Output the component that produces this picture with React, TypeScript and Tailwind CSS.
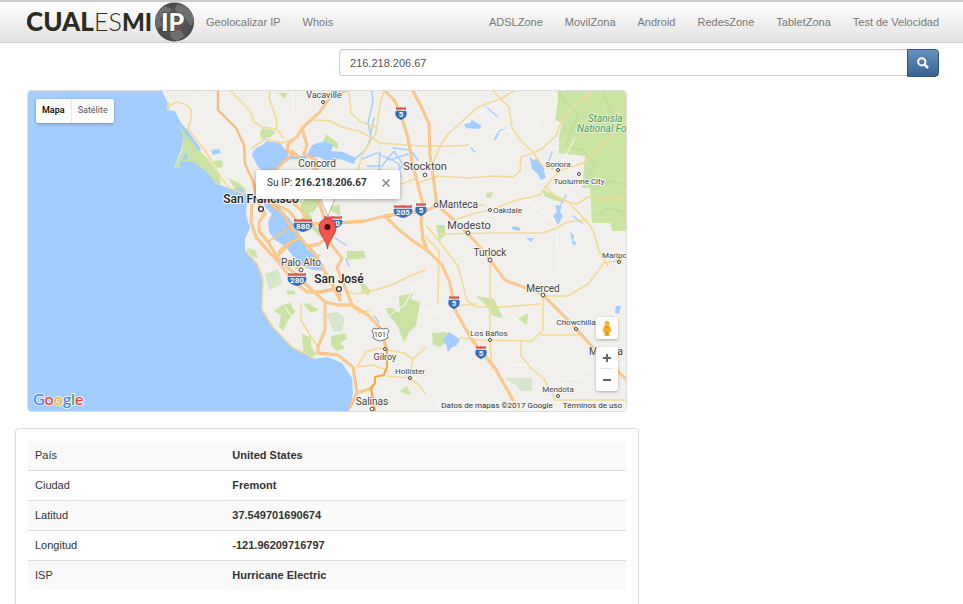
import { FormEvent, useState } from "react";

const leftLinks = ["Geolocalizar IP", "Whois"];
const rightLinks = ["ADSLZone", "MovilZona", "Android", "RedesZone", "TabletZona", "Test de Velocidad"];

const details = [
  ["País", "United States"],
  ["Ciudad", "Fremont"],
  ["Latitud", "37.549701690674"],
  ["Longitud", "-121.96209716797"],
  ["ISP", "Hurricane Electric"],
];

type Town = { name: string; x: number; y: number; size: number; dot?: [number, number]; start?: boolean; strong?: boolean };

const towns: Town[] = [
  { name: "Vacaville", x: 324, y: 98, size: 9, dot: [323, 102] },
  { name: "Concord", x: 317, y: 167, size: 10 },
  { name: "Stockton", x: 425, y: 170, size: 11, dot: [425, 175] },
  { name: "San Francisco", x: 261, y: 203, size: 12, dot: [261, 209], strong: true },
  { name: "Manteca", x: 439, y: 208, size: 10, dot: [436, 205], start: true },
  { name: "Oakdale", x: 493, y: 213, size: 8, dot: [490, 210], start: true },
  { name: "Modesto", x: 469, y: 229, size: 11, dot: [468, 233] },
  { name: "Turlock", x: 490, y: 256, size: 10, dot: [490, 260] },
  { name: "Sonora", x: 558, y: 167, size: 8, dot: [558, 170] },
  { name: "Tuolumne City", x: 579, y: 184, size: 8, dot: [579, 174] },
  { name: "Palo Alto", x: 301, y: 266, size: 10, dot: [301, 270] },
  { name: "San José", x: 339, y: 283, size: 12, dot: [339, 289], strong: true },
  { name: "Merced", x: 543, y: 292, size: 10, dot: [543, 295] },
  { name: "Maripo", x: 602, y: 258, size: 8, dot: [619, 262], start: true },
  { name: "Chowchilla", x: 576, y: 325, size: 8, dot: [576, 329] },
  { name: "Los Baños", x: 489, y: 336, size: 8, dot: [490, 340] },
  { name: "Gilroy", x: 385, y: 360, size: 9, dot: [385, 349] },
  { name: "Hollister", x: 410, y: 374, size: 8, dot: [410, 378] },
  { name: "Madera", x: 606, y: 355, size: 10 },
  { name: "Mendota", x: 558, y: 392, size: 8, dot: [558, 396] },
  { name: "Salinas", x: 372, y: 405, size: 10, dot: [372, 409] },
];

const freeways = [
  "M346 91C335 92 331 97 328 100L320 112L302 128L297 137L288 144L287 150L292 155L278 167L266 188L272 205L284 215L290 226L302 240L315 254L324 270L333 286L340 300",
  "M302 128L307 145L304 154L316 160L318 175L318 200L324 217L334 231L330 243L342 258L337 268L345 287L352 305",
  "M292 151L302 160L315 169M272 203L289 211L297 221L310 224L338 223L365 221L385 216L405 213L425 211L437 206",
  "M253 181L255 190L259 204L265 214L259 222L259 231L268 242L278 258L295 274L312 290L325 302L338 305L352 305L368 315L380 328L387 350",
  "M252 205L251 222L256 237L270 253L279 263L292 280L307 292L319 292L335 289L340 295",
  "M385 91L395 101L402 118L408 138L412 161L418 185L423 204L421 222L423 239L427 250L442 265L450 283L455 310L472 340L495 368L513 400L518 411",
  "M413 91L422 108L429 124L430 155L433 175L437 205L455 221L475 241L490 260L505 280L542 294L568 320L598 353L627 380",
  "M385 216L398 229L413 241L427 250M325 302L325 330L318 347L318 353L338 355L353 367L357 393L350 407M357 393L372 388",
  "M267 178L279 190L290 200L302 211L311 224M301 238L288 243L279 252M330 235L319 244L308 246",
];

const roads = [
  "M168 107L176 102L185 104L191 109L191 119L188 129L205 150L220 176L229 188L247 195",
  "M252 148L265 139L283 143L296 137L304 128M231 91L250 111L254 122L262 127L276 129L277 120L269 98L270 91",
  "M277 129L283 138M315 120L330 121L342 127L359 131L370 137L380 143L420 146L456 146L468 145",
  "M384 91L380 105L376 133L362 155L358 170L374 180L402 184L414 179M349 91L351 113L361 122L376 127",
  "M418 183L438 176L469 178L492 176L513 177L520 171L521 157L530 154L542 149L556 136L562 119L580 101L593 91",
  "M433 163L441 144L448 134L465 119L478 107L500 99L514 91M493 91L509 107L512 128L521 141L532 151L542 165L553 169",
  "M437 205L462 206L485 205M439 234L497 233L543 233L557 228L567 222L586 220L593 230L599 251L608 266",
  "M455 220L472 214L490 210L517 200L540 195L548 184L559 171L583 163L600 148L627 120",
  "M545 186L555 196L567 201L577 211L587 222M564 201L577 204L588 197L627 200",
  "M490 260V340L492 369M427 226L442 245L458 266L467 301L476 307L504 307L540 304M455 306L476 304",
  "M543 295V330L532 341L477 340L460 338M541 335L582 335M521 341V356L532 369L544 379L554 397L558 411",
  "M542 296L568 296L588 284L604 263L622 260M558 400L627 400M345 290L354 294L376 290L394 284L408 277L425 270",
  "M357 367L366 352L378 348L388 350L404 353L413 359L425 348M413 359L410 378L387 376M357 367L373 365L388 371",
  "M410 378L419 385L425 393M247 251L258 265L263 280L262 310L273 327L292 347L314 358",
  "M301 305L301 320L308 332L318 347M352 306L359 313L370 310M425 236L439 251L438 303",
];

const minorRoads = [
  "M190 91L206 107L217 116L229 117L234 126M204 105L212 95M318 110L313 91M293 92L293 116",
  "M400 178L375 196L364 214M435 174L460 155L485 135L503 128M468 119L497 102M503 128L516 135",
  "M508 178L532 205L555 220M557 233L559 274L542 294M493 253L505 270M501 311L520 321",
  "M558 171L568 151L575 138M539 130L535 111M542 145L559 149M425 310L438 313L448 325",
  "M430 403L444 392L456 384M508 365L537 364L555 379L576 378L590 365L627 364",
  "M285 307L297 324L309 336M291 278L299 294L314 307M390 315L405 305L414 286",
];

const bayShore =
  "M252 155C254 146 263 147 266 141L280 143L288 153L287 162L278 166L276 174L271 180L276 203L282 211L290 219L297 230L302 238L307 249L315 255L323 264L325 271L313 270L302 266L292 255L285 246L275 240L269 232L268 222L272 214L266 208L262 201L251 198L260 189L259 180L264 173L257 165Z";

const ponds = [
  "M306 157L312 145L325 141L333 145L331 151L343 152L356 158L354 164L340 159L326 161L319 157Z",
  "M464 124L470 123L472 120L475 122L482 126L479 129L466 128Z",
  "M530 159L534 162L536 158L542 164L546 178L541 180L538 174L532 169Z",
  "M555 205L562 206L560 211L563 216L558 225L553 216L557 211Z",
  "M570 231L574 236L573 240L577 244L573 245Z",
  "M443 340L449 332L455 336L460 340L456 346L452 347L448 352L446 344Z",
  "M511 228L515 226L520 228L520 231L514 230Z",
  "M526 238L534 238L531 242Z",
  "M616 306L621 306L619 314L615 313Z",
  "M211 150L219 149L221 153L213 155Z",
];

const creeks = [
  "M354 160L366 149L371 137L368 123L373 102L372 91M370 137L374 118",
  "M362 159L377 153L390 160L408 154M367 166L382 166L394 151L402 163M380 152L379 169L394 177L405 162M393 148L410 150L418 160M387 157L399 164L400 177",
  "M495 138L500 130L506 128M486 107L497 116M547 166L552 152M566 195L560 206M530 158L544 169M495 140L498 134",
  "M374 316L379 322M335 238L346 245M346 259L349 266M573 216L582 223M471 148L475 152",
];

const parks = [
  "M178 124L185 131L194 145L207 158L219 175L221 185L214 183L207 174L194 163L181 161L180 168L174 168L182 151L183 141Z",
  "M260 132L263 128L276 131L271 137L261 139ZM323 142L326 134L338 143L338 149Z",
  "M228 178L239 183L247 190L242 195L234 187ZM165 103L169 102L170 110L166 109Z",
  "M325 205L340 205L340 216L330 210ZM309 193L320 202L313 213L300 207Z",
  "M360 280L365 285L371 291L368 295L362 293ZM399 296L413 293L411 299L420 302L416 326L410 331L404 342L398 327L388 314L386 308L392 308L400 313Z",
  "M274 311L282 305L291 303L293 309L296 311L288 320L283 331L279 327L281 315Z",
  "M303 304L310 303L319 310L311 313ZM302 334L311 337L311 346L317 355L304 357Z",
  "M331 336L345 333L347 339L340 343L345 348L337 351L331 345ZM400 391L407 386L411 395L403 393Z",
  "M518 319L528 313L527 325Z",
  "M432 333L446 332L452 338L440 347L433 345ZM476 296L494 299L503 318L493 316L486 305Z",
  "M341 189L350 189L349 197L342 197ZM347 251L364 251L366 258L347 260Z",
  "M542 189L561 198L564 203L545 197ZM436 225L445 225L445 235L439 241ZM278 93L287 93L285 99Z",
  "M486 193L493 192L491 198L486 197ZM213 161L222 160L223 167L217 168ZM300 200L308 208L314 225L327 236L321 238L303 219Z",
  "M247 248L255 250L258 258L252 256ZM286 291L294 290L296 294L288 295Z",
];

function Shield({ x, y, label }: { x: number; y: number; label: string }) {
  const wide = label.length > 1;
  return (
    <g transform={`translate(${x} ${y})`}>
      <path d={wide ? "M-9 -6Q-4 -5 0 -6Q4 -5 9 -6V-3H-9Z" : "M-5 -6Q-2 -5 0 -6Q2 -5 5 -6V-3H-5Z"} fill="#d4584f" />
      <path d={wide ? "M-9 -2.500H9C11 3 5 6 0 7C-5 6 -11 3 -9 -2.500Z" : "M-5 -2.500H5C7.500 3 3 6 0 7C-3 6 -7.500 3 -5 -2.500Z"} fill="#3270bd" />
      <path d={wide ? "M-9 -2.800H9" : "M-5 -2.800H5"} stroke="#fff" strokeWidth="0.800" />
      <text y="4" textAnchor="middle" fontSize="8" fontWeight="700" fill="#fff">{label}</text>
    </g>
  );
}

function MapDrawing() {
  return (
    <svg viewBox="28 91 598 320" preserveAspectRatio="xMidYMid slice" className="block h-80 w-full font-[Roboto,sans-serif]" role="img" aria-label="Mapa de la bahía de San Francisco">
      <rect x="28" y="91" width="598" height="320" fill="#f1f0ec" />
      <path d="M558 91H627V231H612L610 223H592L590 188H582L585 156L559 153V137L562 123L555 120L558 101Z" fill="#c9e4a3" />
      <path d="M558 92L578 115L565 146L584 151L595 166L586 180M592 190L609 181L627 185M603 91L611 114L627 118M595 216L609 208L627 213" fill="none" stroke="#c1df9b" strokeWidth="2" />
      {parks.map((d) => <path key={d} d={d} fill="#cae3a5" />)}
      <path d="M505 378L532 378L532 391L521 391L517 386ZM326 314L337 312L345 318L342 331L334 332ZM265 274L278 269L282 284L269 290Z" fill="#d6e5cb" />
      <path d="M28 91H162L167 101V110L175 111L181 123L189 132L201 149L199 151L178 124L183 135L182 147L174 168H180V161L193 162L206 171L216 184L223 186L232 189L241 188L248 195L247 201L246 215L250 228L245 239V251L258 265L263 277L262 310L273 327L292 347L314 359L328 357L342 363L352 378L353 393L349 411H28Z" fill="#a3ccff" />
      <path d={bayShore} fill="#a3ccff" />
      <path d="M182 160L187 151L187 159Z" fill="#a3ccff" />
      <path d="M287 158L307 157" stroke="#a3ccff" strokeWidth="3" />
      {ponds.map((d) => <path key={d} d={d} fill="#a3ccff" />)}
      <g fill="none" strokeLinejoin="round" strokeLinecap="round">
        {creeks.map((d) => <path key={d} d={d} stroke="#a3ccff" strokeWidth="1.4" />)}
        {minorRoads.map((d) => <path key={d} d={d} stroke="#fbfaf8" strokeWidth="1" />)}
        {roads.map((d) => <path key={d} d={d} stroke="#f4d996" strokeWidth="1.6" />)}
        <path d="M269 241L304 218M277 257L299 236M295 269L320 255M260 195L272 199" stroke="#f4c780" strokeWidth="1.5" />
        {freeways.map((d) => <path key={d} d={d} stroke="#f3b670" strokeWidth="2.8" />)}
        {freeways.map((d) => <path key={d} d={d} stroke="#ffce94" strokeWidth="1.6" />)}
        <path d="M218 91V110L236 128L244 145L245 164L253 181L258 198" stroke="#f7bf7b" strokeWidth="2.4" />
        <path d="M387 350V367L384 375L375 377L375 383L371 388L375 411" stroke="#efac45" strokeWidth="2.2" />
      </g>
      <Shield x={401} y={113} label="5" />
      <Shield x={403} y={211} label="205" />
      <Shield x={421} y={209} label="5" />
      <Shield x={303} y={225} label="880" />
      <Shield x={333} y={222} label="680" />
      <Shield x={297} y={279} label="280" />
      <Shield x={454} y={302} label="5" />
      <Shield x={481} y={352} label="5" />
      <path d="M374 328Q377 330 380 328Q383 330 387 328L389 331Q386 334 388 338Q384 340 380 341Q376 340 373 338Q375 334 372 331Z" fill="#fff" stroke="#777" />
      <text x="380" y="337" textAnchor="middle" fontSize="7" fill="#333">101</text>
      <g stroke="#f8f7f4" strokeWidth="2" strokeLinejoin="round" paintOrder="stroke">
        {towns.map((t) => (
          <text key={t.name} x={t.x} y={t.y} fontSize={t.size} fontWeight={t.strong ? 500 : 400} fill={t.strong ? "#222" : "#444"} textAnchor={t.start ? "start" : "middle"}>{t.name}</text>
        ))}
      </g>
      {towns.map((t) => t.dot && (
        <circle key={t.name} cx={t.dot[0]} cy={t.dot[1]} r={t.strong ? 2.4 : t.size > 9 ? 1.9 : 1.5} fill="#fff" stroke="#333" strokeWidth={t.strong ? 1.3 : 0.9} />
      ))}
      <g fontSize="10" fontStyle="italic" fontWeight="400" fill="#4c9a5c" stroke="#e4f2d0" strokeWidth="2" paintOrder="stroke">
        <text x="588" y="122">Stanisla</text>
        <text x="577" y="132">National Fo</text>
      </g>
      <path d="M320 198H335L328 216Z" fill="#fff" stroke="#999" strokeWidth="0.7" />
      <path d="M327.500 249C326.500 239 319 235 319 227A8.500 8.500 0 0 1 336 227C336 235 328.500 239 327.500 249Z" fill="#f5554d" stroke="#a6312d" strokeWidth="0.8" />
      <circle cx="327.500" cy="227" r="3" fill="#4d0d0b" />
    </svg>
  );
}

function GoogleLogo() {
  return (
    <svg viewBox="0 0 54 22" className="h-[22px] w-[54px]" role="img" aria-label="Google">
      <text x="1" y="16" fontSize="16" fontWeight="500" stroke="#e6f0fb" strokeWidth="2" paintOrder="stroke" className="font-[Lato,sans-serif]">
        <tspan fill="#4285f4">G</tspan><tspan fill="#ea4335">o</tspan><tspan fill="#fbbc05">o</tspan><tspan fill="#4285f4">g</tspan><tspan fill="#34a853">l</tspan><tspan fill="#ea4335">e</tspan>
      </text>
    </svg>
  );
}

function SiteLogo() {
  return (
    <svg viewBox="0 0 168 40" className="h-10 w-[168px]" role="img" aria-label="CUALESMI IP">
      <defs>
        <radialGradient id="globe"><stop offset="0" stopColor="#626262" /><stop offset="1" stopColor="#484848" /></radialGradient>
        <clipPath id="globe-edge"><circle cx="147.500" cy="20" r="19.500" /></clipPath>
      </defs>
      <g fill="#2b2d20" className="font-[Lato,sans-serif]">
        <text x="-1" y="29" fontSize="26" fontWeight="900">CUAL</text>
        <text x="67" y="29" fontSize="25" fontWeight="300">ES</text>
        <text x="95" y="29" fontSize="24" fontWeight="900">MI</text>
      </g>
      <circle cx="147.500" cy="20" r="19.500" fill="url(#globe)" />
      <g clipPath="url(#globe-edge)" fill="#6f6f6f">
        <path d="M128 11L138 4L145 7L140 13L133 16L135 23L130 27ZM150 2L162 5L168 16L164 24L159 17L151 14L148 7ZM143 29L153 28L158 34L150 39L144 36Z" />
      </g>
      <text x="134" y="29" fontSize="25" fontWeight="900" fill="#fff" stroke="#444" strokeWidth="1.500" paintOrder="stroke" className="font-[Lato,sans-serif]">IP</text>
    </svg>
  );
}

function NavLinks({ items }: { items: string[] }) {
  return (
    <ul className="flex">
      {items.map((item) => (
        <li key={item}><a href="#" className="block px-[11px] py-3 leading-4 whitespace-nowrap text-[#777] hover:text-[#333]">{item}</a></li>
      ))}
    </ul>
  );
}

export default function App() {
  const [ip, setIp] = useState("216.218.206.67");
  const [open, setOpen] = useState(true);
  const submit = (event: FormEvent) => event.preventDefault();

  return (
    <div className="min-h-screen overflow-hidden bg-white font-['Liberation_Sans',Arial,sans-serif] text-[11px] text-[#333]">
      <header className="border-t-2 border-b border-t-[#cbcbcb] border-b-[#d0d0d0] bg-linear-to-b from-white to-[#e2e2e2]">
        <nav className="flex h-10 items-center pr-[13px] pl-[27px]">
          <a href="#"><SiteLogo /></a>
          <NavLinks items={leftLinks} />
          <div className="ml-auto"><NavLinks items={rightLinks} /></div>
        </nav>
      </header>

      <main className="pr-3 pl-[15px]">
        <form onSubmit={submit} className="mt-1.5 ml-auto flex w-2/3 px-3">
          <input aria-label="Dirección IP" value={ip} onChange={(event) => setIp(event.target.value)} className="h-[27px] min-w-0 flex-1 rounded-l border border-r-0 border-[#ccc] px-2.5 text-[#555] shadow-[inset_0_1px_1px_rgba(0,0,0,0.075)] outline-none" />
          <button aria-label="Buscar" className="flex h-7 w-8 items-center justify-center rounded-r border border-[#2f557f] bg-linear-to-b from-[#6592c2] to-[#3b638f] text-white">
            <svg viewBox="0 0 12 12" className="size-3" fill="none" stroke="currentColor" strokeWidth="2"><circle cx="4.800" cy="4.800" r="3.600" /><path d="M7.500 7.500L11 11" strokeWidth="2.500" /></svg>
          </button>
        </form>

        <section className="mt-[13px] w-2/3 px-3">
          <div className="relative overflow-hidden rounded-sm border border-[#ddd] font-[Roboto,sans-serif]">
            <MapDrawing />
            <div className="absolute top-2 left-2 flex h-6 rounded-xs bg-white text-[9px] shadow-[0_1px_3px_rgba(0,0,0,0.3)]">
              <button className="border-r border-[#e8e8e8] px-1.5 font-medium text-black">Mapa</button>
              <button className="px-1.5 text-[#565656]">Satélite</button>
            </div>
            {open && (
              <div className="absolute top-[79px] left-[228px] flex h-[29px] w-36 items-center justify-between rounded-xs bg-white pr-2 pl-[11px] pb-1 text-[10px] text-[#333] shadow-[0_1px_4px_rgba(0,0,0,0.35)]">
                <p className="whitespace-nowrap">Su IP: <strong>216.218.206.67</strong></p>
                <button aria-label="Cerrar" onClick={() => setOpen(false)} className="p-0.5 text-[#888]">
                  <svg viewBox="0 0 8 8" className="size-2" stroke="currentColor" strokeWidth="1.500"><path d="M0.500 0.500L7.500 7.500M7.500 0.500L0.500 7.500" /></svg>
                </button>
              </div>
            )}
            <div className="absolute right-2 bottom-5 flex w-[22px] flex-col">
              <button aria-label="Street View" className="mb-2 flex h-[22px] items-center justify-center rounded-xs bg-white shadow-[0_1px_3px_rgba(0,0,0,0.3)]">
                <svg viewBox="0 0 12 18" className="h-[17px] w-3"><circle cx="6" cy="3.500" r="2.700" fill="#f8b62d" /><path d="M3 6H9L11 12L9 12.500L8.500 17H3.500L3 12.500L1 12Z" fill="#f5af22" /><path d="M4.500 6L6 8L7.500 6M6 12V16" stroke="#c97d13" fill="none" /></svg>
              </button>
              <div className="flex flex-col rounded-xs bg-white px-1 text-[#666] shadow-[0_1px_3px_rgba(0,0,0,0.3)]">
                <button aria-label="Acercar" className="flex h-[22px] items-center justify-center border-b border-[#e6e6e6]"><svg viewBox="0 0 8 8" className="size-2" stroke="currentColor" strokeWidth="2"><path d="M0 4H8M4 0V8" /></svg></button>
                <button aria-label="Alejar" className="flex h-[22px] items-center justify-center"><svg viewBox="0 0 8 8" className="size-2" stroke="currentColor" strokeWidth="2"><path d="M0 4H8" /></svg></button>
              </div>
            </div>
            <div className="absolute bottom-0 left-1"><GoogleLogo /></div>
            <div className="absolute right-0 bottom-0 flex gap-2.5 bg-[#f5f5f5]/80 px-1 text-[8px] leading-[10px] text-[#333]">
              <span>Datos de mapas ©2017 Google</span>
              <a href="#">Términos de uso</a>
            </div>
          </div>
        </section>

        <section className="mt-4 w-2/3 rounded border border-[#ddd] px-3 pt-3 pb-8">
          <table className="w-full border-collapse text-left leading-[15px]">
            <tbody>
              {details.map(([label, value]) => (
                <tr key={label} className="border-t border-[#ddd] first:border-t-0 odd:bg-[#f9f9f9]">
                  <th scope="row" className="w-[33%] p-[7px] font-normal">{label}</th>
                  <td className="p-[7px] font-bold">{value}</td>
                </tr>
              ))}
            </tbody>
          </table>
        </section>
      </main>
    </div>
  );
}
